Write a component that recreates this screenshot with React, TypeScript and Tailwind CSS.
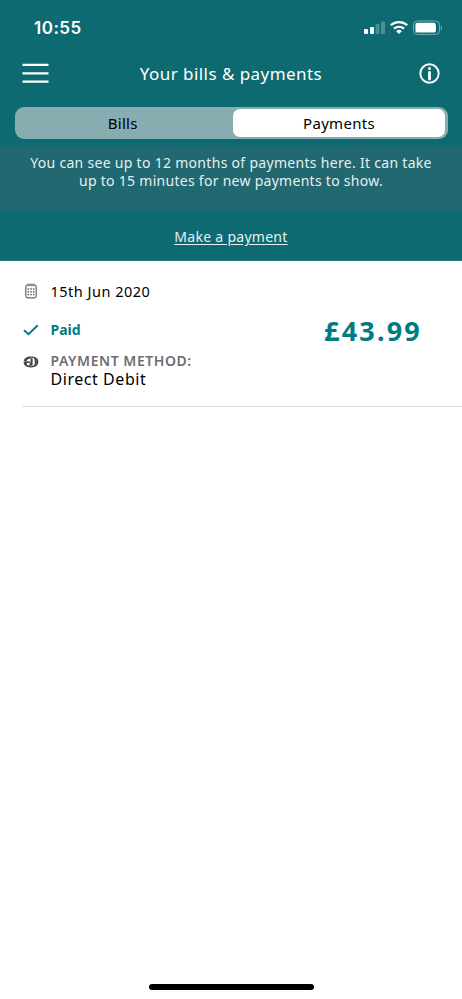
import React, { useState } from "react";

const tabs = ["Bills", "Payments"];

function StatusBar() {
  return (
    <div className="flex h-[54px] items-center justify-between pl-[34px] pr-[20px] pt-[2px]">
      <span className="whitespace-nowrap font-['Inter',sans-serif] text-[17px] font-semibold leading-5 tracking-[0.5px]">10:55</span>
      <svg width="79" height="16" viewBox="0 0 79 16" fill="none">
        <rect x="1" y="9" width="4" height="5" rx="1" fill="white" />
        <rect x="7" y="7" width="4" height="7" rx="1" fill="white" />
        <rect x="12.5" y="4" width="4" height="10" rx="1" fill="white" opacity="0.25" />
        <rect x="18" y="1.5" width="4" height="12.5" rx="1" fill="white" opacity="0.25" />
        <path d="M27.8 5.2a12.4 12.4 0 0 1 16.4 0" stroke="white" strokeWidth="2.4" />
        <path d="M31 8.7a7.7 7.7 0 0 1 10 0" stroke="white" strokeWidth="2.3" />
        <path d="M36 14l-2.8-2.8a4 4 0 0 1 5.6 0z" fill="white" />
        <rect x="50.5" y="1" width="26" height="13.4" rx="4" stroke="white" strokeOpacity="0.45" />
        <rect x="52.4" y="2.8" width="20.5" height="9.8" rx="2.2" fill="white" />
        <path d="M77.8 5.5v4.6c1.4-.5 1.4-4.1 0-4.6z" fill="white" opacity="0.5" />
      </svg>
    </div>
  );
}

function CalendarIcon() {
  return (
    <svg width="12" height="16" viewBox="0 0 12 16" fill="none" stroke="#66676b">
      <rect x="0.8" y="2" width="10.4" height="12.8" rx="1.8" strokeWidth="1.2" />
      <path d="M3 .5v2.7M5 .5v2.7M7 .5v2.7M9 .5v2.7" strokeWidth="1" />
      <path d="M2.5 6h7.2M2.5 8.7h7.2M2.5 11.4h7.2" strokeWidth="1.5" strokeDasharray="1.6 1.1" />
    </svg>
  );
}

function DirectDebitIcon() {
  return (
    <svg width="16" height="12" viewBox="0 0 16 12" fill="none">
      <path d="M7.8.4C3.7.4.9 2.5.7 5.2l3.2-.5C4.2 3.3 5.5 2.4 7.8 2.4z" fill="#424348" />
      <path d="M6.8 5.2C3.2 5 .6 5.3.6 6.6c0 2.6 3 4.8 7.2 4.8V9.3H5.6C4.4 9.3 3.8 8.8 3.8 8s.7-1.3 1.8-1.3h1.2z" fill="#424348" />
      <path d="M7.6 2.3h2v7.2h-3V6.2h1z" fill="#424348" />
      <path d="M7.8 1.1c4.5-.2 6.9 2 6.9 4.8s-2.4 5-6.9 4.8" stroke="#424348" strokeWidth="1.4" />
      <path d="M10.6 1.4c2.2.7 3.4 2.3 3.4 4.5s-1.2 3.8-3.4 4.5c.8-1 1.2-2.5 1.2-4.5s-.4-3.5-1.2-4.5z" fill="#424348" />
    </svg>
  );
}

export default function App() {
  const [active, setActive] = useState("Payments");

  return (
    <div className="flex h-[999px] w-[462px] flex-col overflow-hidden bg-white font-['Noto_Sans',sans-serif] text-black">
      <header className="h-[145px] bg-[#0d6a71] text-white">
        <StatusBar />
        <div className="flex h-[38px] items-center justify-between pl-[22px] pr-[22px]">
          <button aria-label="Menu">
            <svg width="27" height="20" viewBox="0 0 27 20" fill="none">
              <path d="M.5 1.9h26M.5 10.3h26M.5 18.7h26" stroke="white" strokeWidth="2.3" />
            </svg>
          </button>
          <h1 className="mr-[6px] whitespace-nowrap pt-px text-[17px] leading-6 tracking-[0.45px]">Your bills &amp; payments</h1>
          <button aria-label="Information">
            <svg width="21" height="21" viewBox="0 0 21 21" fill="none">
              <circle cx="10.5" cy="10.5" r="9.2" stroke="white" strokeWidth="1.9" />
              <circle cx="10.5" cy="5.6" r="1.5" fill="white" />
              <path d="M10.5 9.4v6.7" stroke="white" strokeWidth="2.8" strokeLinecap="round" />
            </svg>
          </button>
        </div>
        <div className="ml-[14.5px] mt-[15px] grid h-[32px] w-[433px] grid-cols-[1fr_212px] gap-[2px] rounded-[9px] bg-[#87adb1] py-[2px] pr-[2.5px]">
          {tabs.map((tab) => (
            <button
              key={tab}
              onClick={() => setActive(tab)}
              className={`h-[28px] rounded-[7px] text-[15px] leading-[27px] tracking-[0.3px] text-black ${active === tab ? "bg-white" : ""}`}
            >
              {tab}
            </button>
          ))}
        </div>
      </header>

      <section className="h-[67px] bg-[#216870] pt-[9px] text-center text-[14px] leading-[17.5px] text-[#e7eff0]">
        <p className="whitespace-nowrap tracking-[0.3px]">You can see up to 12 months of payments here. It can take</p>
        <p className="whitespace-nowrap tracking-[0.28px]">up to 15 minutes for new payments to show.</p>
      </section>

      <div className="flex h-[49px] items-center justify-center border-b border-[#2d7b82] bg-[#0d6a71] pt-[2px]">
        <a className="whitespace-nowrap text-[14px] leading-5 tracking-[0.28px] text-[#e7eff0] underline underline-offset-2">Make a payment</a>
      </div>

      <main className="ml-[22px] flex h-[146px] border-b border-[#dcdcdc]">
        <div className="flex-1 pt-[20px]">
          <div className="flex h-[20px] items-center">
            <span className="flex w-[28.5px] pl-[3px]"><CalendarIcon /></span>
            <span className="text-[14.5px] leading-5 tracking-[0.5px]">15th Jun 2020</span>
          </div>
          <div className="mt-[19px] flex h-[20px] items-center">
            <span className="flex w-[28.5px] pl-[1px]">
              <svg width="16" height="12" viewBox="0 0 16 12" fill="none">
                <path d="M1 6.2l4.5 4L14.7 1.2" stroke="#007b82" strokeWidth="1.9" />
              </svg>
            </span>
            <span className="text-[14px] font-bold leading-5 text-[#007b82]">Paid</span>
          </div>
          <div className="mt-[12px] flex">
            <span className="flex h-[20px] w-[28.5px] items-center pl-[1px]"><DirectDebitIcon /></span>
            <div>
              <div className="text-[14px] font-semibold leading-[18px] tracking-[0.55px] text-[#6d6e73]">PAYMENT METHOD:</div>
              <div className="text-[16px] leading-[19px] tracking-[0.55px]">Direct Debit</div>
            </div>
          </div>
        </div>
        <div className="pr-[40px] pt-[54px] text-[27px] font-bold leading-8 tracking-[2.2px] text-[#007b82]">£43.99</div>
      </main>

      <div className="mb-[9px] mt-auto h-[6px] w-[165px] self-center rounded-full bg-black" />
    </div>
  );
}
